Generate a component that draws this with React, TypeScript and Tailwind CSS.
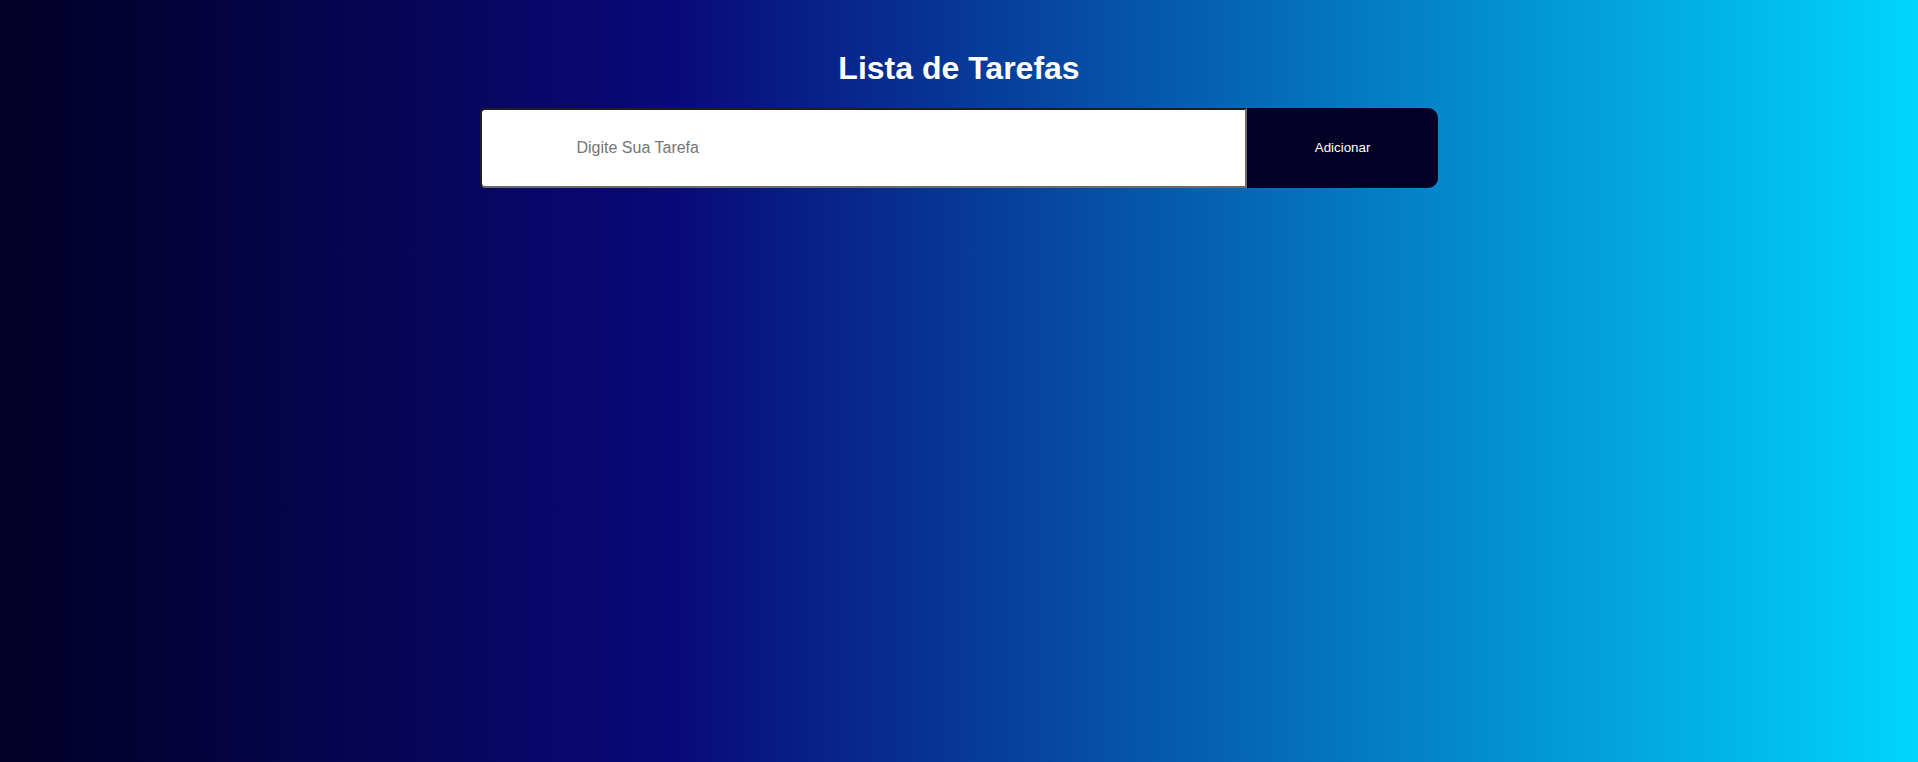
import React, { useState } from "react";

// Simple todo list page: title, input and add button over a horizontal gradient
const App = () => {
  const [task, setTask] = useState("");
  const [tasks, setTasks] = useState<string[]>([]);

  const handleAdd = () => {
    if (task.trim() === "") return;
    setTasks([...tasks, task]);
    setTask("");
  };

  return (
    <div
      className="min-h-screen w-full flex flex-col items-center pt-[50px] bg-[linear-gradient(90deg,#020024_0%,#090979_35%,#00d4ff_100%)]"
      style={{ fontFamily: '"Liberation Sans", Arial, sans-serif' }}
    >
      <h1 className="text-[32px] leading-[37px] font-bold text-white mb-[21px]">
        Lista de Tarefas
      </h1>
      <div className="flex w-1/2 h-20">
        <input
          className="w-4/5 h-full bg-white rounded-l-[5px] border-2 border-t-[#1f1f1f] border-l-[#1f1f1f] border-r-[#6b6b6b] border-b-[#6b6b6b] pl-[95px] text-base text-black placeholder:text-[#757575] outline-none"
          type="text"
          value={task}
          placeholder="Digite Sua Tarefa"
          onChange={(event) => setTask(event.target.value)}
        />
        <button
          className="w-1/5 h-full bg-[#020024] rounded-r-[10px] text-white text-[13.33px] cursor-pointer"
          onClick={handleAdd}
        >
          Adicionar
        </button>
      </div>
      {tasks.length > 0 && (
        <ul className="w-1/2 mt-4 flex flex-col gap-2">
          {tasks.map((item, index) => (
            <li key={index} className="bg-white rounded px-4 py-3 text-[15px]">
              {item}
            </li>
          ))}
        </ul>
      )}
    </div>
  );
};

export default App;
